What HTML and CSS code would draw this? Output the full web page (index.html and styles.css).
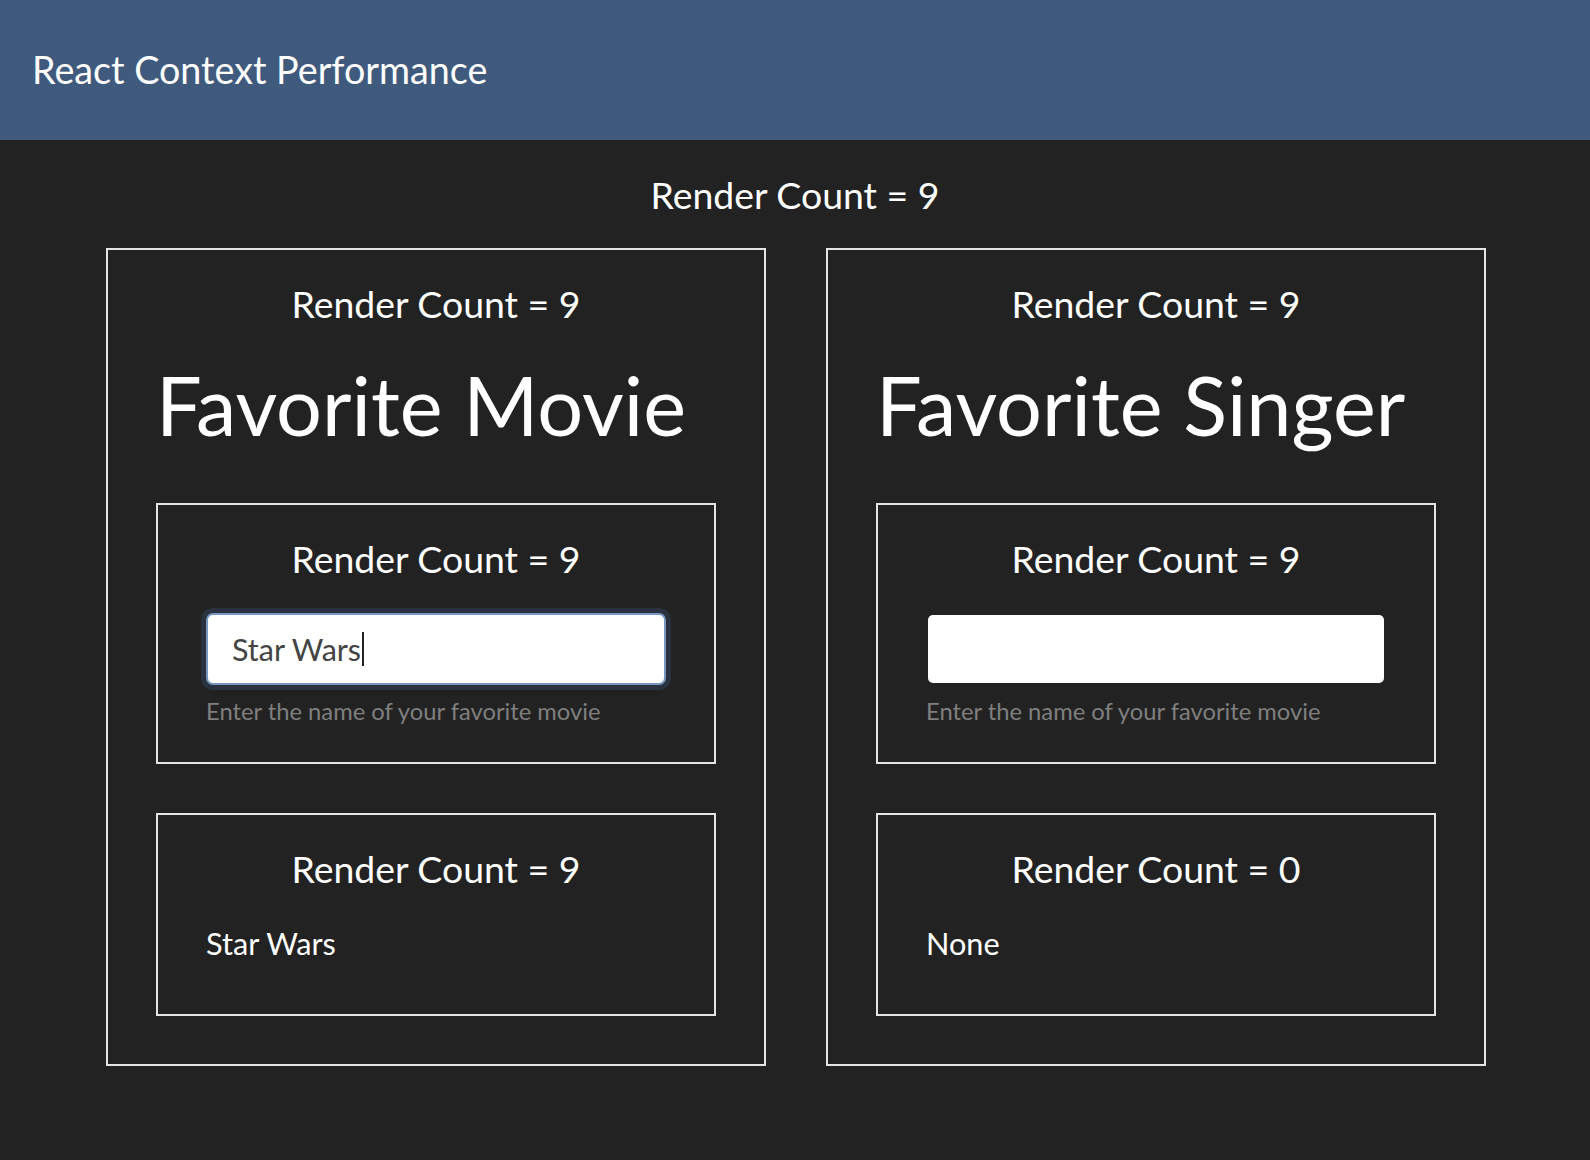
FILE: index.html
```html
<!DOCTYPE html>
<html lang="en">
<head>
<meta charset="utf-8">
<title>React Context Performance</title>
<link rel="stylesheet" href="styles.css">
</head>
<body>
<header class="topbar">
  <h1 class="topbar-title">React Context Performance</h1>
</header>
<main class="app">
  <p class="count count-top">Render Count = 9</p>
  <div class="cards">
    <section class="card">
      <p class="count">Render Count = 9</p>
      <h2 class="card-title">Favorite Movie</h2>
      <div class="box box-form">
        <p class="count">Render Count = 9</p>
        <div class="field is-focused" role="textbox" aria-label="Favorite movie"><span class="field-text">Star Wars</span><span class="caret"></span></div>
        <p class="help">Enter the name of your favorite movie</p>
      </div>
      <div class="box box-value">
        <p class="count">Render Count = 9</p>
        <p class="value">Star Wars</p>
      </div>
    </section>
    <section class="card">
      <p class="count">Render Count = 9</p>
      <h2 class="card-title">Favorite Singer</h2>
      <div class="box box-form">
        <p class="count">Render Count = 9</p>
        <input class="field" type="text" aria-label="Favorite singer">
        <p class="help">Enter the name of your favorite movie</p>
      </div>
      <div class="box box-value">
        <p class="count">Render Count = 0</p>
        <p class="value">None</p>
      </div>
    </section>
  </div>
</main>
</body>
</html>
```

FILE: styles.css
```css
* {
  box-sizing: border-box;
}

html, body {
  margin: 0;
  padding: 0;
}

body {
  background: #222222;
  color: #ffffff;
  font-family: Lato, "Open Sans", "Liberation Sans", sans-serif;
  min-height: 1160px;
}

.topbar {
  background: #3f5a7d;
  padding: 48px 32px 49px;
}

.topbar-title {
  margin: 0;
  font-size: 37.7px;
  font-weight: 400;
  line-height: 43px;
  color: #ffffff;
}

.app {
  padding-bottom: 60px;
}

.count {
  margin: 0;
  font-size: 37.4px;
  line-height: 43px;
  text-align: center;
  color: #ffffff;
}

.count-top {
  margin: 33px 0 32px;
}

.cards {
  display: grid;
  grid-template-columns: 660px 660px;
  gap: 60px;
  justify-content: center;
  padding-left: 2px;
}

.card {
  border: 2px solid #e4e4e7;
  padding: 32px 48px 48px;
}

.card-title {
  margin: 32px 0 50px;
  font-size: 81px;
  font-weight: 400;
  line-height: 96px;
  color: #ffffff;
}

.box {
  border: 2px solid #e4e4e7;
  padding: 32px 48px 36px;
}

.box + .box {
  margin-top: 49px;
}

.box-value {
  padding-bottom: 52px;
}

.field {
  display: flex;
  align-items: center;
  width: 100%;
  height: 72px;
  margin-top: 33px;
  padding: 16px 24px;
  border: 2px solid transparent;
  border-radius: 7px;
  background: #ffffff;
  background-clip: padding-box;
  font-family: inherit;
  font-size: 30.5px;
  line-height: 36px;
  color: #444444;
  outline: none;
}

.field.is-focused {
  border-color: #7897c0;
  background-clip: border-box;
  box-shadow: 0 0 0 5px #29323e;
}

.caret {
  display: inline-block;
  width: 2px;
  height: 34px;
  margin-left: 1px;
  background: #222222;
}

.help {
  margin: 12px 0 0;
  font-size: 23.75px;
  line-height: 29px;
  color: #7f7f7f;
}

.value {
  margin: 36px 0 0;
  font-size: 30.7px;
  line-height: 36px;
  color: #ffffff;
}
```
